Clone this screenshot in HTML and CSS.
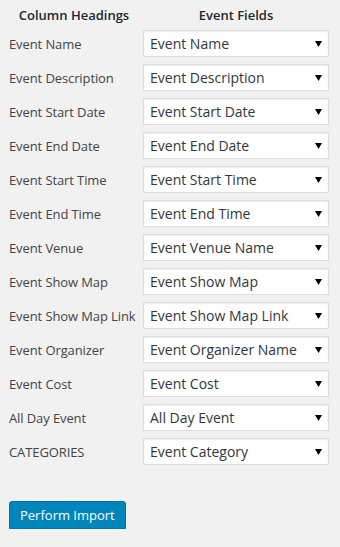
FILE: index.html
```html
<!DOCTYPE html>
<html lang="en">
<head>
    <meta charset="UTF-8" />
    <meta name="viewport" content="width=device-width, initial-scale=1.0" />
    <title>Event Import</title>
    <link rel="stylesheet" href="styles.css">
</head>
<body>

<div class="wrap">
    <div class="map-grid">
        <div class="map-head map-head-first">Column Headings</div>
        <div class="map-head">Event Fields</div>

        <label class="map-label">Event Name</label>
        <select class="map-select"><option>Event Name</option></select>

        <label class="map-label">Event Description</label>
        <select class="map-select"><option>Event Description</option></select>

        <label class="map-label">Event Start Date</label>
        <select class="map-select"><option>Event Start Date</option></select>

        <label class="map-label">Event End Date</label>
        <select class="map-select"><option>Event End Date</option></select>

        <label class="map-label">Event Start Time</label>
        <select class="map-select"><option>Event Start Time</option></select>

        <label class="map-label">Event End Time</label>
        <select class="map-select"><option>Event End Time</option></select>

        <label class="map-label">Event Venue</label>
        <select class="map-select"><option>Event Venue Name</option></select>

        <label class="map-label">Event Show Map</label>
        <select class="map-select"><option>Event Show Map</option></select>

        <label class="map-label">Event Show Map Link</label>
        <select class="map-select"><option>Event Show Map Link</option></select>

        <label class="map-label">Event Organizer</label>
        <select class="map-select"><option>Event Organizer Name</option></select>

        <label class="map-label">Event Cost</label>
        <select class="map-select"><option>Event Cost</option></select>

        <label class="map-label">All Day Event</label>
        <select class="map-select"><option>All Day Event</option></select>

        <label class="map-label">CATEGORIES</label>
        <select class="map-select"><option>Event Category</option></select>
    </div>

    <button class="button-primary">Perform Import</button>
</div>

</body>
</html>
```

FILE: styles.css
```css
/* General */
body {
    margin: 0;
    background: #f1f1f1;
    font-family: 'Open Sans', sans-serif;
    color: #444;
    font-size: 13px;
}

.wrap {
    padding: 6px 11px 0 9px;
}

/* Mapping table */
.map-grid {
    display: grid;
    grid-template-columns: 134px 186px;
    row-gap: 7px;
    align-items: center;
}

.map-head {
    font-size: 13px;
    font-weight: 600;
    color: #23282d;
    text-align: center;
    line-height: 18px;
    margin-bottom: -1px;
}

.map-head-first {
    padding-right: 4px;
}

.map-label {
    font-size: 13px;
    color: #444;
    letter-spacing: -0.1px;
}

.map-select {
    -webkit-appearance: none;
    appearance: none;
    height: 27px;
    width: 186px;
    margin: 0;
    padding: 0 20px 0 6px;
    font-family: 'Open Sans', sans-serif;
    font-size: 14px;
    color: #32373c;
    background-color: #fff;
    background-image: url("data:image/svg+xml,%3Csvg xmlns='http://www.w3.org/2000/svg' width='7' height='6'%3E%3Cpath d='M0 0h7L3.5 6z' fill='%23000'/%3E%3C/svg%3E");
    background-repeat: no-repeat;
    background-position: right 6px center;
    border: 1px solid #ddd;
    border-radius: 0;
    box-shadow: inset 0 1px 2px rgba(0, 0, 0, 0.07);
    outline: none;
}

/* Button */
.button-primary {
    margin-top: 36px;
    height: 28px;
    padding: 0 10px 1px;
    font-family: 'Open Sans', sans-serif;
    font-size: 13px;
    line-height: 26px;
    color: #fff;
    background: #0085ba;
    border: 1px solid #0073aa;
    border-radius: 3px;
    box-shadow: 0 1px 0 #006799;
    cursor: pointer;
}
```
